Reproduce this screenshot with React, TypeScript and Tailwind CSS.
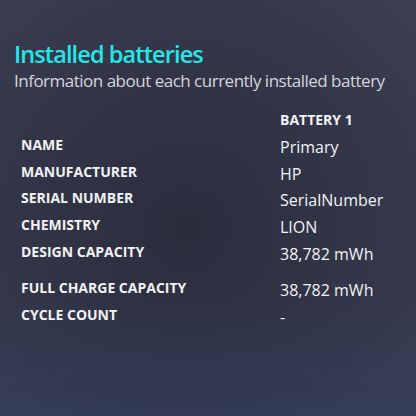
import React from 'react';

const rows: { label: string; value: string; gap?: boolean }[] = [
  { label: 'NAME', value: 'Primary' },
  { label: 'MANUFACTURER', value: 'HP' },
  { label: 'SERIAL NUMBER', value: 'SerialNumber' },
  { label: 'CHEMISTRY', value: 'LION' },
  { label: 'DESIGN CAPACITY', value: '38,782 mWh' },
  { label: 'FULL CHARGE CAPACITY', value: '38,782 mWh', gap: true },
  { label: 'CYCLE COUNT', value: '-' },
];

const App: React.FC = () => {
  return (
    <div
      className="w-[416px] h-[416px] overflow-hidden bg-[radial-gradient(ellipse_at_45%_55%,#2b2d3d_0%,#333648_55%,#3c3f52_100%)] font-['Open_Sans',sans-serif] relative"
    >
      {/* bluish tint at the bottom */}
      <div className="absolute inset-x-0 bottom-0 h-[120px] bg-[linear-gradient(to_bottom,transparent,#30406080)]" />
      <div className="relative pt-[39px] pl-[14px]">
        <h1 className="text-[23.5px] leading-[30px] font-semibold text-[#25e6e8] tracking-[-0.9px]">Installed batteries</h1>
        <p className="text-[17px] leading-[24px] text-[#d4d5dc] tracking-[-0.5px] whitespace-nowrap">
          Information about each currently installed battery
        </p>

        <div className="mt-[15px] pl-[7px] grid grid-cols-[259px_1fr] text-[#f2f2f4]">
          <div />
          <div className="text-[14px] font-bold leading-[24px] h-[24px]">BATTERY 1</div>
          {rows.map((r) => (
            <React.Fragment key={r.label}>
              <div className={`text-[14px] font-bold leading-[26.7px] h-[26.7px] ${r.gap ? 'mt-[10px]' : ''}`}>
                {r.label}
              </div>
              <div className={`text-[16px] leading-[26.7px] h-[26.7px] pt-[2px] ${r.gap ? 'mt-[10px]' : ''}`}>
                {r.value}
              </div>
            </React.Fragment>
          ))}
        </div>
      </div>
    </div>
  );
};

export default App;
